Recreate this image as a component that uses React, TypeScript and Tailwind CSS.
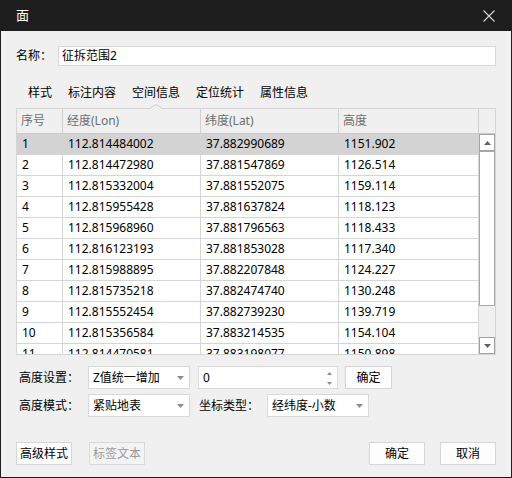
import React from "react";

const rows: [string, string, string, string][] = [
  ["1", "112.814484002", "37.882990689", "1151.902"],
  ["2", "112.814472980", "37.881547869", "1126.514"],
  ["3", "112.815332004", "37.881552075", "1159.114"],
  ["4", "112.815955428", "37.881637824", "1118.123"],
  ["5", "112.815968960", "37.881796563", "1118.433"],
  ["6", "112.816123193", "37.881853028", "1117.340"],
  ["7", "112.815988895", "37.882207848", "1124.227"],
  ["8", "112.815735218", "37.882474740", "1130.248"],
  ["9", "112.815552454", "37.882739230", "1139.719"],
  ["10", "112.815356584", "37.883214535", "1154.104"],
  ["11", "112.814470581", "37.883198077", "1150.898"],
];

const tabs = ["样式", "标注内容", "空间信息", "定位统计", "属性信息"];

function Arrow() {
  return (
    <svg className="absolute right-[5px] top-1/2 -translate-y-1/2" width="7" height="4" viewBox="0 0 7 4">
      <polygon points="0,0 7,0 3.5,4" fill="#8c8c8c" />
    </svg>
  );
}

function Select({ text, w }: { text: string; w: string }) {
  return (
    <div className={`relative flex h-[23px] ${w} items-center border border-[#d9d9d9] bg-white pl-[4px]`}>
      <span className="leading-none">{text}</span>
      <Arrow />
    </div>
  );
}

function Btn({ text, disabled }: { text: string; disabled?: boolean }) {
  return (
    <div
      className={
        disabled
          ? "flex h-[23px] w-[56px] items-center justify-center border border-[#d9d9d9] bg-[#f3f3f3] text-[#9a9a9a]"
          : "flex h-[23px] w-[56px] items-center justify-center border border-[#d6d6d6] bg-[#fdfdfd]"
      }
    >
      {text}
    </div>
  );
}

export default function App() {
  return (
    <div className="flex h-[478px] w-[512px] flex-col overflow-hidden border-x border-b border-[#1e1e1e] bg-[#f0f0f0] font-['Noto_Sans','Noto_Sans_CJK_SC',sans-serif] text-[12px] text-black">
      {/* title bar */}
      <div className="flex h-[31px] shrink-0 items-center justify-between bg-[#1e1e1e] pl-[15px] pr-[16px]">
        <span className="text-[13px] text-white">面</span>
        <svg width="12" height="12" viewBox="0 0 12 12">
          <path d="M0.5 0.5 L11.5 11.5 M11.5 0.5 L0.5 11.5" stroke="#d6d6d6" strokeWidth="1.1" />
        </svg>
      </div>

      <div className="flex flex-1 flex-col px-[15px]">
        {/* name row */}
        <div className="mt-[15px] flex h-[20px] items-center">
          <div className="w-[42px]">名称：</div>
          <div className="flex h-[20px] flex-1 items-center border border-[#d6d6d6] bg-white pl-[3px]">
            征拆范围2
          </div>
        </div>

        {/* tabs */}
        <div className="flex h-[42px] pl-[4px] pt-[16px]">
          {tabs.map((t) => (
            <div key={t} className="relative h-[22px] px-[8px] leading-[22px]">
              {t}
              {t === "空间信息" && (
                <svg
                  className="absolute left-1/2 top-[22px] z-10 -translate-x-1/2"
                  width="13"
                  height="5"
                  viewBox="0 0 13 5"
                >
                  <polygon points="0,5 6.5,0 13,5" fill="#f0f0f0" />
                  <polyline points="0,4.5 6.5,0.5 13,4.5" fill="none" stroke="#cfcfcf" strokeWidth="1" />
                </svg>
              )}
            </div>
          ))}
        </div>

        {/* table */}
        <div className="flex h-[247px] flex-col border border-[#d5d5d5] bg-white">
          <div className="flex h-[25px] shrink-0 border-b border-[#c9c9c9] bg-[#f0f0f0] text-[#6e6e6e]">
            <div className="flex w-[46px] items-center border-r border-[#d0d0d0] pl-[4px]">序号</div>
            <div className="flex w-[138px] items-center border-r border-[#d0d0d0] pl-[4px]">经度(Lon)</div>
            <div className="flex w-[138px] items-center border-r border-[#d0d0d0] pl-[4px]">纬度(Lat)</div>
            <div className="flex w-[140px] items-center border-r border-[#d0d0d0] pl-[4px]">高度</div>
            <div className="flex-1" />
          </div>
          <div className="flex min-h-0 flex-1 overflow-hidden">
            <div className="flex w-[462px] flex-col">
              {rows.map((r, i) => (
                <div
                  key={r[0]}
                  className={`flex h-[21px] shrink-0 border-b border-[#d5d5d5] ${i === 0 ? "bg-[#d3d3d3]" : "bg-white"}`}
                >
                  <div className="flex w-[46px] items-center border-r border-[#d5d5d5] pl-[5px]">{r[0]}</div>
                  <div className="flex w-[138px] items-center border-r border-[#d5d5d5] pl-[5px]">{r[1]}</div>
                  <div className="flex w-[138px] items-center border-r border-[#d5d5d5] pl-[5px]">{r[2]}</div>
                  <div className="flex w-[140px] items-center border-r border-[#d5d5d5] pl-[5px]">{r[3]}</div>
                </div>
              ))}
            </div>
            {/* scrollbar */}
            <div className="flex w-[17px] flex-col bg-[#f0f0f0]">
              <div className="flex h-[17px] w-[16px] items-center justify-center border border-[#a3a3a3] bg-white">
                <svg width="7" height="4" viewBox="0 0 7 4">
                  <polygon points="0,4 7,4 3.5,0" fill="#606060" />
                </svg>
              </div>
              <div className="h-[155px] w-[16px] border border-[#a8a8a8] bg-white" />
              <div className="flex-1" />
              <div className="flex h-[17px] w-[16px] items-center justify-center border border-[#a3a3a3] bg-white">
                <svg width="7" height="4" viewBox="0 0 7 4">
                  <polygon points="0,0 7,0 3.5,4" fill="#606060" />
                </svg>
              </div>
            </div>
          </div>
        </div>

        {/* form row 1 */}
        <div className="mt-[11px] flex items-center">
          <div className="w-[72px] pl-[3px]">高度设置：</div>
          <Select text="Z值统一增加" w="w-[102px]" />
          <div className="relative ml-[8px] flex h-[23px] w-[140px] items-center border border-[#d9d9d9] bg-white pl-[4px]">
            <span className="leading-none">0</span>
            <svg className="absolute right-[5px] top-[5px]" width="5" height="3" viewBox="0 0 5 3">
              <polygon points="0,3 5,3 2.5,0" fill="#8c8c8c" />
            </svg>
            <svg className="absolute right-[5px] top-[15px]" width="5" height="3" viewBox="0 0 5 3">
              <polygon points="0,0 5,0 2.5,3" fill="#8c8c8c" />
            </svg>
          </div>
          <div className="ml-[7px] flex h-[23px] w-[47px] items-center justify-center border border-[#d6d6d6] bg-[#fdfdfd]">
            确定
          </div>
        </div>

        {/* form row 2 */}
        <div className="mt-[5px] flex items-center">
          <div className="w-[72px] pl-[3px]">高度模式：</div>
          <Select text="紧贴地表" w="w-[102px]" />
          <div className="w-[77px] pl-[9px]">坐标类型：</div>
          <Select text="经纬度-小数" w="w-[102px]" />
        </div>

        {/* bottom buttons */}
        <div className="mt-[25px] flex items-center">
          <Btn text="高级样式" />
          <div className="ml-[17px]">
            <Btn text="标签文本" disabled />
          </div>
          <div className="flex-1" />
          <Btn text="确定" />
          <div className="ml-[15px]">
            <Btn text="取消" />
          </div>
        </div>
      </div>
    </div>
  );
}
